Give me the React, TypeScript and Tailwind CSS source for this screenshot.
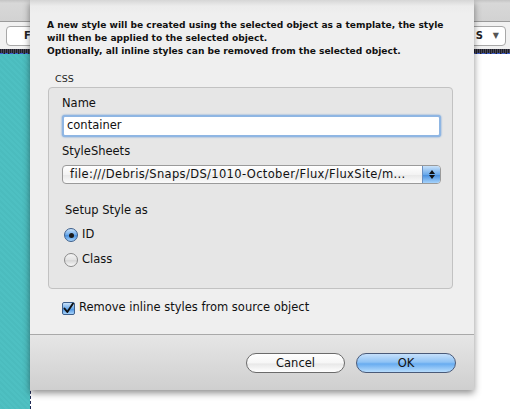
import React from "react";

const font = { fontFamily: '"DejaVu Sans", "Liberation Sans", sans-serif' };

const aqua = "bg-[linear-gradient(to_bottom,#c9e2fa,#6aa9ea_50%,#4b92e0_55%,#a6d3fb)]";

const Radio = ({ checked, label }: { checked: boolean; label: string }) => (
  <div className="flex items-center h-[14px] gap-[4px]">
    {checked ? (
      <span className={`w-[14px] h-[14px] rounded-full border border-[#3d5f8c] ${aqua} flex items-center justify-center`}>
        <span className="w-[5px] h-[5px] rounded-full bg-[#1a1a1a]" />
      </span>
    ) : (
      <span className="w-[14px] h-[14px] rounded-full border border-[#8a8a8a] bg-[linear-gradient(to_bottom,#f4f4f4,#e2e2e2_50%,#d6d6d6_55%,#fafafa)]" />
    )}
    <span className="text-[11.5px] text-[#111]">{label}</span>
  </div>
);

export default function App() {
  return (
    <div className="relative w-[510px] h-[409px] overflow-hidden bg-white" style={font}>
      {/* window behind the sheet */}
      <div className="flex flex-col w-full h-full">
        <div className="h-[22px] bg-[linear-gradient(to_bottom,#c4c4c4,#d8d8d8_15%,#d2d2d2)] border-b border-[#9a9a9a]" />
        <div className="h-[27px] bg-[#f1f1f1] flex items-center justify-between">
          <div className="ml-[6px] w-[60px] h-[20px] rounded-[4px] border border-[#a8a8a8] bg-white flex items-center pl-[17px]">
            <span className="text-[10px] font-bold text-[#222]">F</span>
          </div>
          <div className="mr-[4px] w-[60px] h-[20px] rounded-[4px] border border-[#a8a8a8] bg-white flex items-center justify-end pr-[6px] gap-[10px]">
            <span className="text-[10px] font-bold text-[#222]">S</span>
            <span className="text-[8px] text-[#555]">▼</span>
          </div>
        </div>
        <div className="h-[5px] bg-[repeating-linear-gradient(90deg,#1e1e2a_0px,#1e1e2a_1px,#4a4a55_1px,#4a4a55_2px)] border-b border-dashed border-[#3a5bd0]" />
        <div className="flex flex-1">
          <div className="w-[30px] bg-[repeating-linear-gradient(45deg,#4ec0c2_0px,#4ec0c2_2px,#4bbcbe_2px,#4bbcbe_4px)]" />
          <div className="flex-1 bg-white border-l border-dashed border-[#1f2a55]" />
        </div>
      </div>

      {/* sheet dialog */}
      <div className="absolute left-[30px] top-0 w-[444px] h-[390px] flex flex-col shadow-[0_3px_7px_rgba(0,0,0,0.45)]">
        <div className="flex-1 bg-[linear-gradient(to_bottom,#d6d6d6,#ececec_6px,#efefef_14px)] flex flex-col pl-[18px] pr-[21px] pt-[19px]">
          <div className="text-[9.1px] font-bold leading-[13px] text-[#111] -ml-[1px] whitespace-nowrap">
            <div>A new style will be created using the selected object as a template, the style</div>
            <div>will then be applied to the selected object.</div>
            <div>Optionally, all inline styles can be removed from the selected object.</div>
          </div>
          <div className="mt-[15px] ml-[7px] h-[12px] leading-[12px] text-[9.5px] text-[#222]">CSS</div>
          <div className="mt-[2px] h-[202px] rounded-[4px] border border-[#c2c2c2] bg-[#e6e6e6] flex flex-col pl-[13px] pr-[11px] pt-[8px]">
            <div className="h-[14px] leading-[14px] text-[11.5px] text-[#111]">Name</div>
            <div className="mt-[5px] h-[22px] rounded-[3px] border-2 border-[#8fb6e3] shadow-[0_0_2px_#5f95d6] bg-white flex items-center pl-[3px]">
              <span className="text-[11.5px] text-[#111]">container</span>
            </div>
            <div className="mt-[7px] h-[14px] leading-[14px] text-[11.5px] text-[#111]">StyleSheets</div>
            <div className="mt-[7px] h-[19px] rounded-[4px] border border-[#9a9a9a] bg-[linear-gradient(to_bottom,#ffffff,#f3f3f3_50%,#e9e9e9_55%,#fbfbfb)] flex items-center overflow-hidden">
              <span className="flex-1 pl-[7px] text-[11.5px] tracking-[0.35px] text-[#111] whitespace-nowrap">file:///Debris/Snaps/DS/1010-October/Flux/FluxSite/m...</span>
              <span className={`w-[18px] h-full border-l border-[#6a8fc0] ${aqua} flex flex-col items-center justify-center gap-[1px]`}>
                <svg width="6" height="4" viewBox="0 0 6 4"><path d="M0 4 L3 0 L6 4 Z" fill="#111" /></svg>
                <svg width="6" height="4" viewBox="0 0 6 4"><path d="M0 0 L3 4 L6 0 Z" fill="#111" /></svg>
              </span>
            </div>
            <div className="mt-[19px] ml-[3px] h-[14px] leading-[14px] text-[11.5px] text-[#111]">Setup Style as</div>
            <div className="mt-[11px] ml-[2px]">
              <Radio checked label="ID" />
            </div>
            <div className="mt-[11px] ml-[2px]">
              <Radio checked={false} label="Class" />
            </div>
          </div>
          <div className="mt-[12px] ml-[14px] flex items-center h-[14px] gap-[4px]">
            <span className={`w-[13px] h-[13px] rounded-[2px] border border-[#3d5f8c] ${aqua} flex items-center justify-center`}>
              <svg width="11" height="11" viewBox="0 0 11 11">
                <path d="M1.5 5.5 L4.3 9 L10 0.5" fill="none" stroke="#111" strokeWidth="1.9" strokeLinecap="round" strokeLinejoin="round" />
              </svg>
            </span>
            <span className="text-[11.5px] text-[#111]">Remove inline styles from source object</span>
          </div>
          <div className="flex-1" />
        </div>
        <div className="h-[56px] border-t border-[#a9a9a9] bg-[linear-gradient(to_bottom,#e6e6e6,#cfcfcf)] flex justify-end items-start pt-[18px] pr-[18px] gap-[11px]">
          <button className="w-[99px] h-[20px] rounded-full border border-[#6b6b6b] bg-[linear-gradient(to_bottom,#ffffff,#f6f6f6_50%,#e8e8e8_55%,#ffffff)] text-[11.5px] text-[#111] leading-[18px]" style={font}>
            Cancel
          </button>
          <button className="w-[100px] h-[20px] rounded-full border border-[#4a5a78] bg-[linear-gradient(to_bottom,#c6e0fb,#8fc3f5_45%,#68acf0_55%,#b8ddfd)] text-[11.5px] text-[#111] leading-[18px]" style={font}>
            OK
          </button>
        </div>
      </div>
    </div>
  );
}
